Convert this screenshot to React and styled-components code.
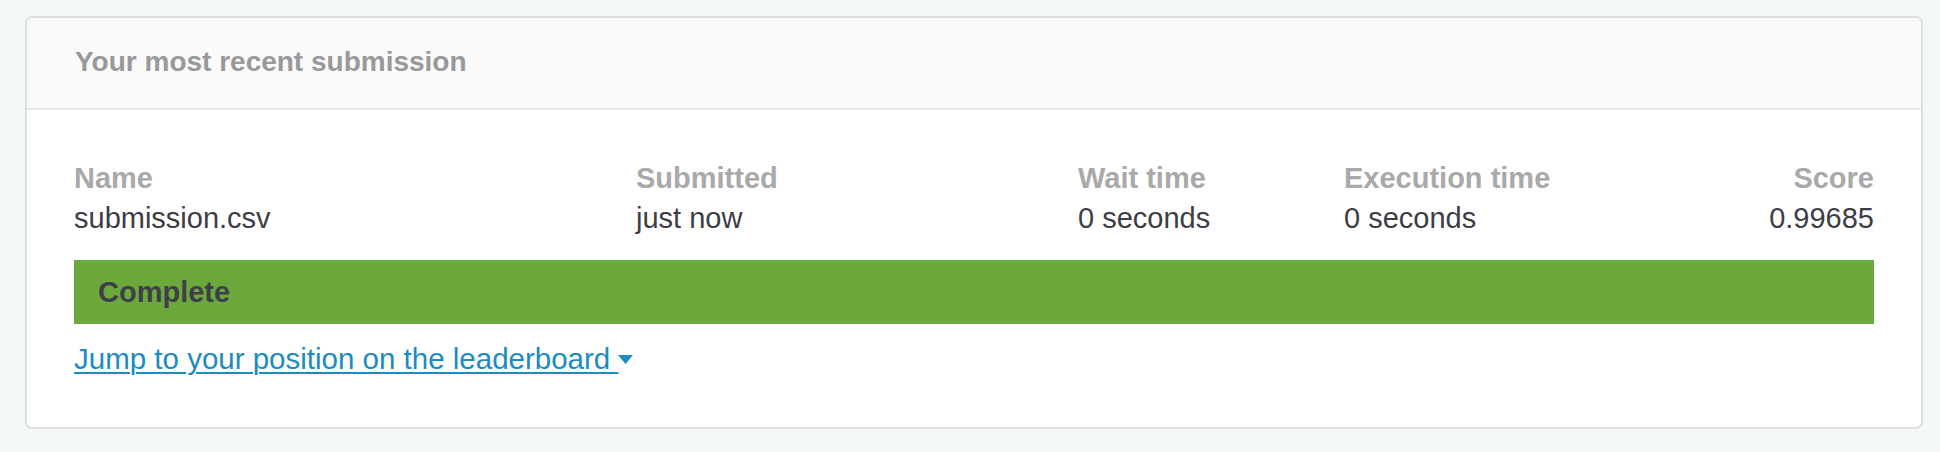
import styled, { createGlobalStyle } from "styled-components";

const Global = createGlobalStyle`
  html, body {
    margin: 0;
    padding: 0;
    background: #f4f7f8;
  }
  body {
    font-family: "Liberation Sans", Arial, sans-serif;
  }
`;

const Page = styled.div`
  padding: 16px 17px 23px 25px;
`;

const Card = styled.section`
  background: #fff;
  border: 2px solid #dedfe1;
  border-radius: 7px;
  overflow: hidden;
`;

const Header = styled.header`
  background: #fafafa;
  border-bottom: 2px solid #e8e8e8;
  padding: 24px 48px 26px;
  h2 {
    margin: 0;
    font-size: 28px;
    line-height: 40px;
    font-weight: 700;
    color: #999;
  }
`;

const Body = styled.div`
  padding: 48px 47px 48px;
`;

const Stats = styled.div`
  display: grid;
  grid-template-columns: 562px 442px 266px 1fr auto;
  font-size: 29px;
  line-height: 40px;
`;

const Stat = styled.div`
  text-align: ${(p) => (p.$right ? "right" : "left")};
  .label {
    font-weight: 700;
    color: #a9a9a9;
  }
  .value {
    color: #3d3d45;
  }
`;

const Status = styled.div`
  margin-top: 22px;
  background: #6ba93d;
  padding: 12px 24px 12px;
  font-size: 29px;
  line-height: 40px;
  font-weight: 700;
  color: #3e3f49;
`;

const JumpLink = styled.a`
  display: inline-flex;
  align-items: center;
  margin-top: 15px;
  font-size: 29.5px;
  line-height: 40px;
  color: #1b8cbf;
  text-decoration: underline;
  text-underline-offset: 3px;
  text-decoration-thickness: 2px;
  white-space: pre;
  cursor: pointer;
  svg {
    flex: none;
  }
`;

const stats = [
  { label: "Name", value: "submission.csv" },
  { label: "Submitted", value: "just now" },
  { label: "Wait time", value: "0 seconds" },
  { label: "Execution time", value: "0 seconds" },
  { label: "Score", value: "0.99685", right: true },
];

export default function App() {
  return (
    <Page>
      <Global />
      <Card>
        <Header>
          <h2>Your most recent submission</h2>
        </Header>
        <Body>
          <Stats>
            {stats.map((s) => (
              <Stat key={s.label} $right={s.right}>
                <div className="label">{s.label}</div>
                <div className="value">{s.value}</div>
              </Stat>
            ))}
          </Stats>
          <Status>Complete</Status>
          <JumpLink href="#leaderboard">
            {"Jump to your position on the leaderboard "}
            <svg width="15" height="9" viewBox="0 0 15 9">
              <path d="M0 0h15L7.5 9z" fill="#1b8cbf" />
            </svg>
          </JumpLink>
        </Body>
      </Card>
    </Page>
  );
}
